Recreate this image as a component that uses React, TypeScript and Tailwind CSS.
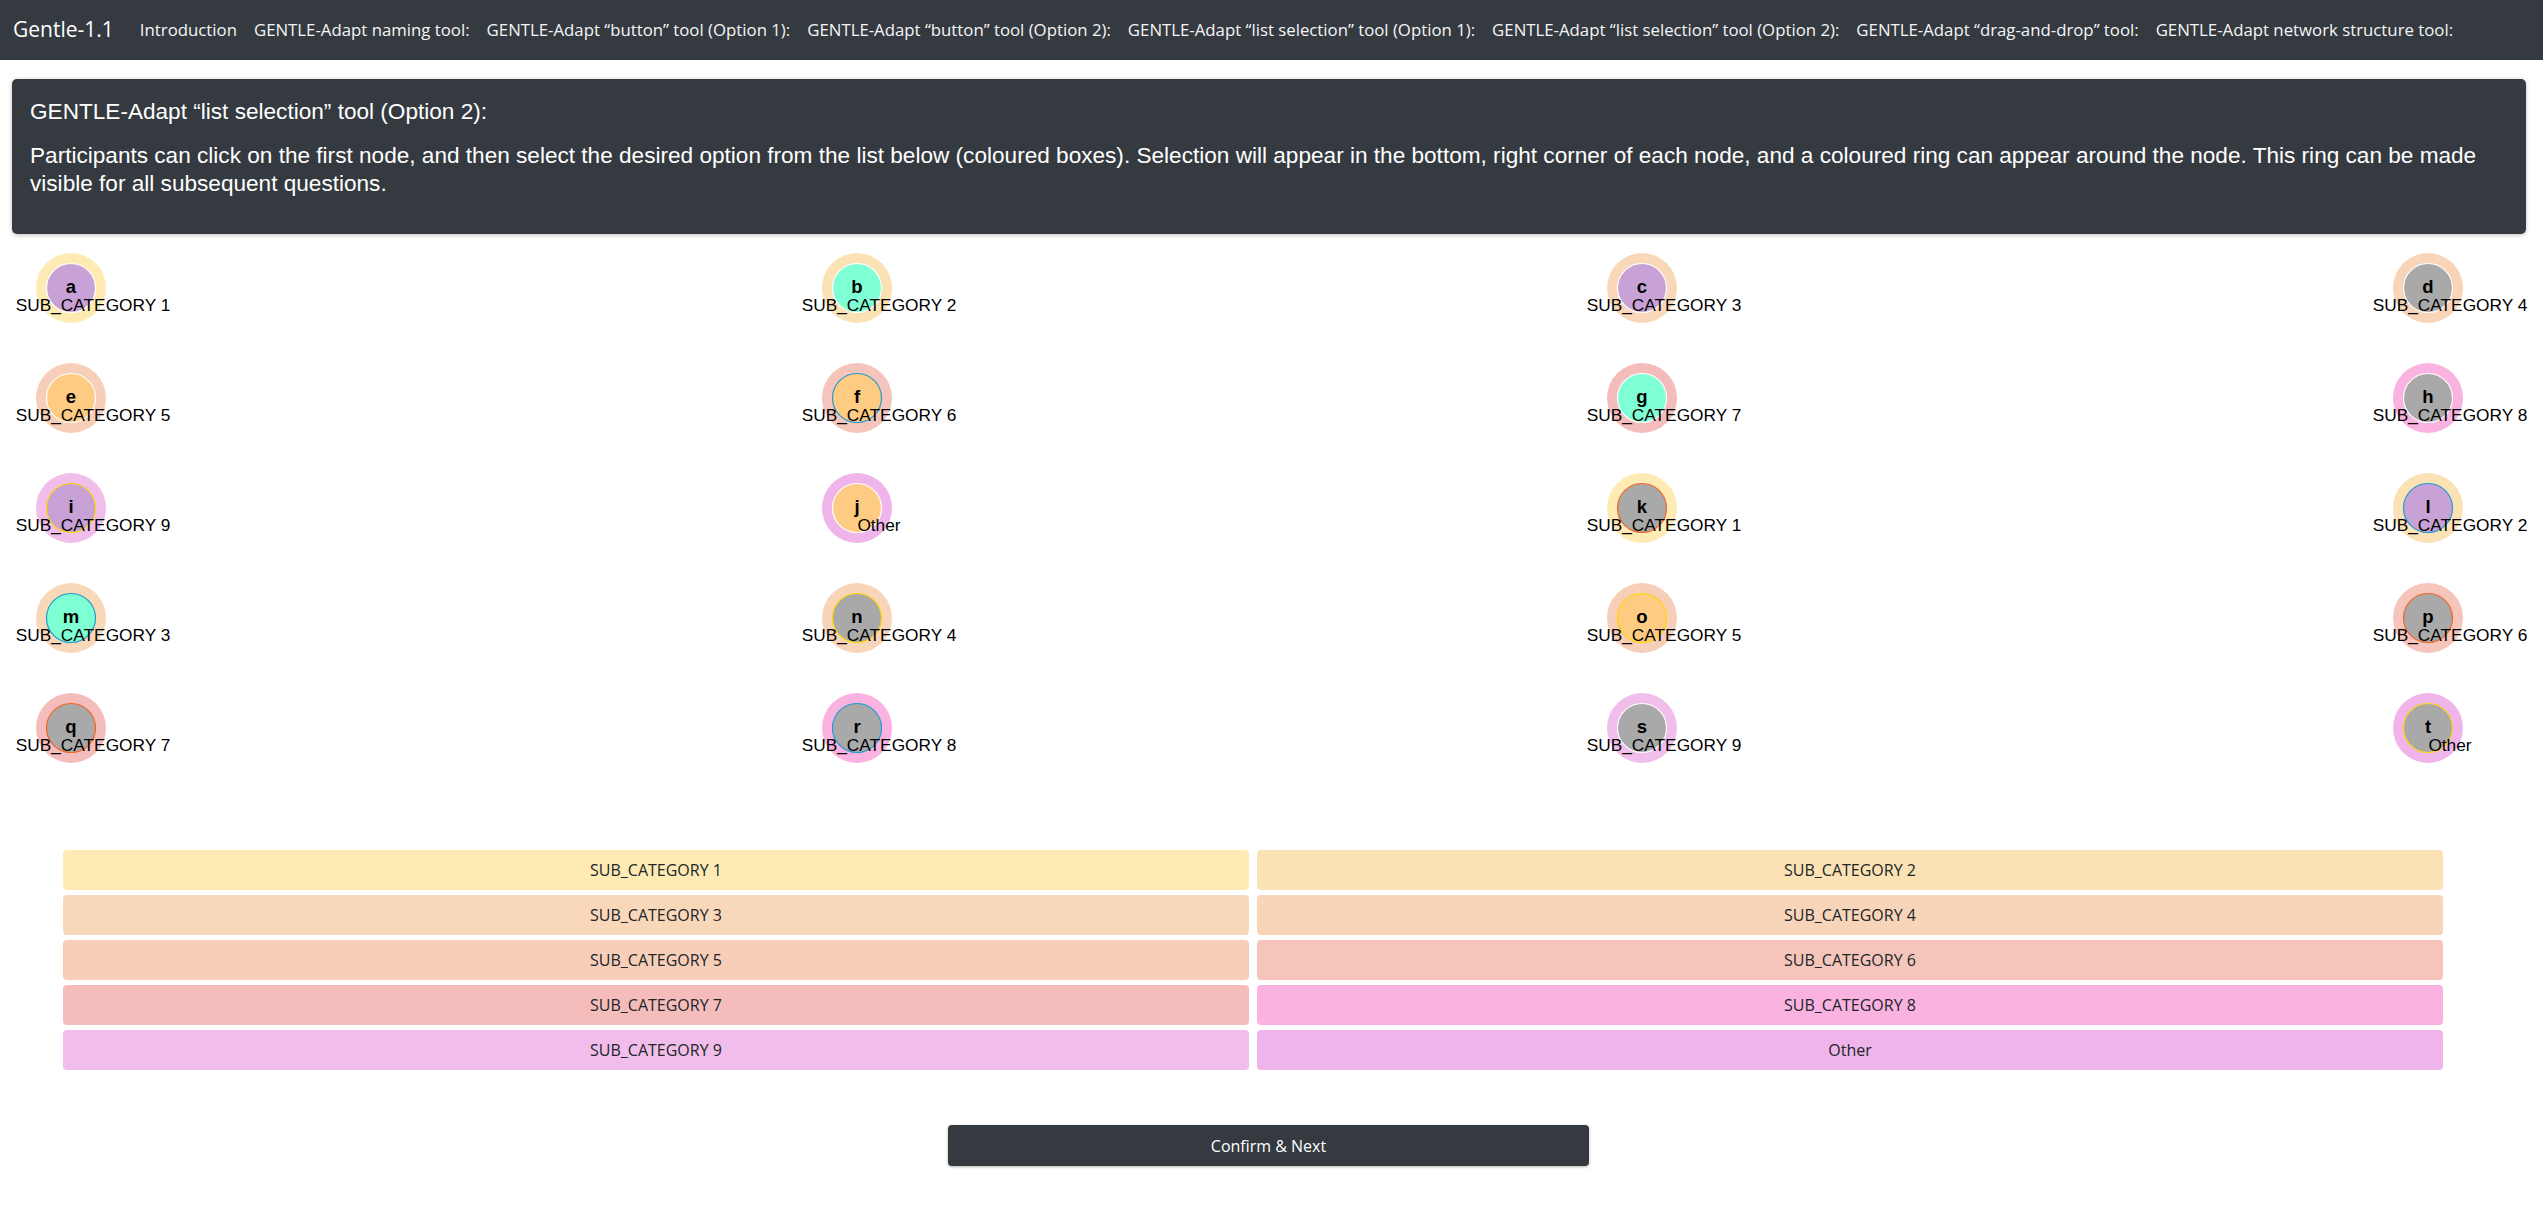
import React from 'react';

const NAV_LINKS = [
  'Introduction',
  'GENTLE-Adapt naming tool:',
  'GENTLE-Adapt “button” tool (Option 1):',
  'GENTLE-Adapt “button” tool (Option 2):',
  'GENTLE-Adapt “list selection” tool (Option 1):',
  'GENTLE-Adapt “list selection” tool (Option 2):',
  'GENTLE-Adapt “drag-and-drop” tool:',
  'GENTLE-Adapt network structure tool:',
];

// category colours (ring + list boxes)
const CAT: Record<string, string> = {
  'SUB_CATEGORY 1': '#feebb4',
  'SUB_CATEGORY 2': '#fbe2b5',
  'SUB_CATEGORY 3': '#f9d8b9',
  'SUB_CATEGORY 4': '#f8d5b9',
  'SUB_CATEGORY 5': '#f7ceb8',
  'SUB_CATEGORY 6': '#f5c5bb',
  'SUB_CATEGORY 7': '#f4bcbb',
  'SUB_CATEGORY 8': '#fab2e1',
  'SUB_CATEGORY 9': '#f1beeb',
  Other: '#efb5ea',
};

const PURPLE = '#c8a2d6';
const AQUA = '#7fffd4';
const ORANGE = '#fecb82';
const GRAY = '#a9a9a9';

const WHITE = '#ffffff';
const BLUE = '#1f9bcf';
const YELLOW = '#ffd700';
const RED = '#f26522';

type Node = { id: string; fill: string; stroke: string; label: string };

const NODES: Node[] = [
  { id: 'a', fill: PURPLE, stroke: WHITE, label: 'SUB_CATEGORY 1' },
  { id: 'b', fill: AQUA, stroke: WHITE, label: 'SUB_CATEGORY 2' },
  { id: 'c', fill: PURPLE, stroke: WHITE, label: 'SUB_CATEGORY 3' },
  { id: 'd', fill: GRAY, stroke: WHITE, label: 'SUB_CATEGORY 4' },
  { id: 'e', fill: ORANGE, stroke: WHITE, label: 'SUB_CATEGORY 5' },
  { id: 'f', fill: ORANGE, stroke: BLUE, label: 'SUB_CATEGORY 6' },
  { id: 'g', fill: AQUA, stroke: WHITE, label: 'SUB_CATEGORY 7' },
  { id: 'h', fill: GRAY, stroke: WHITE, label: 'SUB_CATEGORY 8' },
  { id: 'i', fill: PURPLE, stroke: YELLOW, label: 'SUB_CATEGORY 9' },
  { id: 'j', fill: ORANGE, stroke: WHITE, label: 'Other' },
  { id: 'k', fill: GRAY, stroke: RED, label: 'SUB_CATEGORY 1' },
  { id: 'l', fill: PURPLE, stroke: BLUE, label: 'SUB_CATEGORY 2' },
  { id: 'm', fill: AQUA, stroke: BLUE, label: 'SUB_CATEGORY 3' },
  { id: 'n', fill: GRAY, stroke: YELLOW, label: 'SUB_CATEGORY 4' },
  { id: 'o', fill: ORANGE, stroke: YELLOW, label: 'SUB_CATEGORY 5' },
  { id: 'p', fill: GRAY, stroke: RED, label: 'SUB_CATEGORY 6' },
  { id: 'q', fill: GRAY, stroke: RED, label: 'SUB_CATEGORY 7' },
  { id: 'r', fill: GRAY, stroke: BLUE, label: 'SUB_CATEGORY 8' },
  { id: 's', fill: GRAY, stroke: WHITE, label: 'SUB_CATEGORY 9' },
  { id: 't', fill: GRAY, stroke: YELLOW, label: 'Other' },
];

const OPTIONS = [
  'SUB_CATEGORY 1', 'SUB_CATEGORY 2',
  'SUB_CATEGORY 3', 'SUB_CATEGORY 4',
  'SUB_CATEGORY 5', 'SUB_CATEGORY 6',
  'SUB_CATEGORY 7', 'SUB_CATEGORY 8',
  'SUB_CATEGORY 9', 'Other',
];

const NodeSvg: React.FC<{ node: Node }> = ({ node }) => (
  <svg width="154" height="110" viewBox="0 0 154 110" className="overflow-visible">
    <circle cx="55" cy="54" r="35" fill={CAT[node.label]} />
    <circle cx="55" cy="54" r="24.5" fill={node.fill} stroke={node.stroke} strokeWidth="1.2" />
    <text x="55" y="59" textAnchor="middle" fontFamily="'Liberation Sans', Arial, sans-serif" fontWeight="bold" fontSize="18.5" fill="#000">
      {node.id}
    </text>
    <text x="77" y="77" textAnchor="middle" fontFamily="'Liberation Sans', Arial, sans-serif" fontSize="17.3" fill="#000">
      {node.label}
    </text>
  </svg>
);

export default function App() {
  const rows = [0, 1, 2, 3, 4].map(r => NODES.slice(r * 4, r * 4 + 4));

  return (
    <div className="w-[2543px] min-h-[1231px] bg-white font-['Open_Sans',sans-serif]">
      {/* navbar */}
      <nav className="h-[60px] bg-[#343a40] flex items-center pl-[13px]">
        <span className="text-[21px] text-white mr-[26px]">Gentle-1.1</span>
        <div className="flex gap-[17px] text-[16.8px] text-[#f4f5f6]">
          {NAV_LINKS.map(l => (
            <span key={l} className="whitespace-nowrap">{l}</span>
          ))}
        </div>
      </nav>

      {/* description card */}
      <div className="mt-[19px] ml-[12px] mr-[17px] h-[155px] rounded-[5px] bg-[#343a40] shadow-[0_1px_4px_rgba(0,0,0,0.25)] px-[18px] pt-[20px] text-white font-['Liberation_Sans',Arial,sans-serif] text-[22.6px]">
        <h5 className="leading-[26px]">GENTLE-Adapt “list selection” tool (Option 2):</h5>
        <p className="mt-[17px] leading-[28px]">
          Participants can click on the first node, and then select the desired option from the list below (coloured boxes). Selection will appear in the bottom, right corner of each node, and a coloured ring can appear around the node. This ring can be made visible for all subsequent questions.
        </p>
      </div>

      {/* nodes */}
      <div className="flex flex-col px-[16px]">
        {rows.map((row, i) => (
          <div key={i} className="flex justify-between">
            {row.map(n => (
              <NodeSvg key={n.id} node={n} />
            ))}
          </div>
        ))}
      </div>

      {/* option list */}
      <div className="mt-[66px] ml-[63px] w-[2380px] grid grid-cols-2 gap-x-[8px] gap-y-[5px]">
        {OPTIONS.map(o => (
          <button
            key={o}
            className="h-[40px] rounded-[4px] text-[16px] text-[#212529]"
            style={{ backgroundColor: CAT[o] }}
          >
            {o}
          </button>
        ))}
      </div>

      {/* confirm */}
      <div className="mt-[55px] ml-[948px]">
        <button className="w-[641px] h-[41px] rounded-[4px] bg-[#343a40] text-white text-[16px] shadow-[0_1px_3px_rgba(0,0,0,0.3)]">
          Confirm &amp; Next
        </button>
      </div>
    </div>
  );
}
